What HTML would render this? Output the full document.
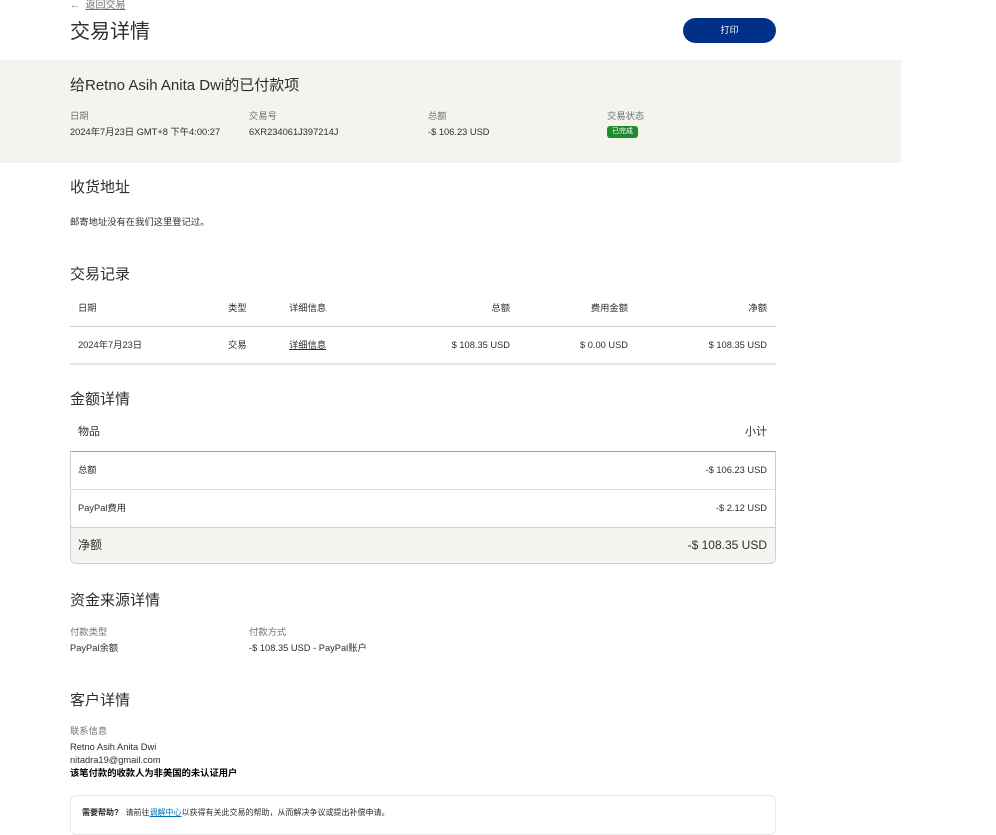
<!DOCTYPE html>
<html><head><meta charset="utf-8"><style>
*{margin:0;padding:0;box-sizing:border-box}
body{width:996px;height:824px;background:#fff;font-family:"Liberation Sans","Noto Sans CJK SC",sans-serif;color:#2c2e2f;position:relative;overflow:hidden}
.a{position:absolute;white-space:nowrap;line-height:1}
.s{font-size:9.3px}
.l{color:#6c7378}
.h{font-size:15px;color:#2c2e2f}
.r{text-align:right}
</style></head><body>
<div class="a s l" style="left:70px;top:1px;font-size:10px">←&nbsp; <span style="text-decoration:underline">返回交易</span></div>
<div class="a" style="left:70px;top:22px;font-size:20px">交易详情</div>
<div class="a" style="left:683px;top:18px;width:93px;height:25px;border-radius:13px;background:#003087;color:#fff;font-size:9px;line-height:25px;text-align:center">打印</div>

<div class="a" style="left:0;top:60px;width:901px;height:103px;background:#f4f3ee"></div>
<div class="a h" style="left:70px;top:78px">给Retno Asih Anita Dwi的已付款项</div>
<div class="a s l" style="left:70px;top:112px">日期</div>
<div class="a s" style="left:70px;top:128px">2024年7月23日 GMT+8 下午4:00:27</div>
<div class="a s l" style="left:249px;top:112px">交易号</div>
<div class="a s" style="left:249px;top:128px">6XR234061J397214J</div>
<div class="a s l" style="left:428px;top:112px">总额</div>
<div class="a s" style="left:428px;top:128px">-$ 106.23 USD</div>
<div class="a s l" style="left:607px;top:112px">交易状态</div>
<div class="a" style="left:607px;top:126px;width:31px;height:12px;border-radius:3px;background:#1e8c2c;color:#fff;font-size:7px;line-height:12px;text-align:center">已完成</div>

<div class="a h" style="left:70px;top:180px">收货地址</div>
<div class="a s" style="left:70px;top:218px">邮寄地址没有在我们这里登记过。</div>

<div class="a h" style="left:70px;top:267px">交易记录</div>
<div class="a s" style="left:78px;top:304px">日期</div>
<div class="a s" style="left:228px;top:304px">类型</div>
<div class="a s" style="left:289px;top:304px">详细信息</div>
<div class="a s r" style="left:410px;width:100px;top:304px">总额</div>
<div class="a s r" style="left:528px;width:100px;top:304px">费用金额</div>
<div class="a s r" style="left:667px;width:100px;top:304px">净额</div>
<div class="a" style="left:70px;top:326px;width:706px;height:1px;background:#cbd2d6"></div>
<div class="a s" style="left:78px;top:341px">2024年7月23日</div>
<div class="a s" style="left:228px;top:341px">交易</div>
<div class="a s" style="left:289px;top:341px;text-decoration:underline">详细信息</div>
<div class="a s r" style="left:410px;width:100px;top:341px">$ 108.35 USD</div>
<div class="a s r" style="left:528px;width:100px;top:341px">$ 0.00 USD</div>
<div class="a s r" style="left:667px;width:100px;top:341px">$ 108.35 USD</div>
<div class="a" style="left:70px;top:363px;width:706px;height:2px;background:#e3e6e8"></div>

<div class="a h" style="left:70px;top:392px">金额详情</div>
<div class="a" style="left:78px;top:427px;font-size:11px">物品</div>
<div class="a r" style="left:667px;width:100px;top:427px;font-size:11px">小计</div>
<div class="a" style="left:70px;top:451px;width:706px;height:113px;border:1px solid #cbd2d6;border-top:1px solid #9da3a6;border-radius:0 0 6px 6px;overflow:hidden">
 <div style="position:absolute;left:0;top:75px;width:100%;height:38px;background:#f5f4f0;border-top:1px solid #cbd2d6"></div>
 <div style="position:absolute;left:0;top:37px;width:100%;height:1px;background:#dcdfe1"></div>
</div>
<div class="a s" style="left:78px;top:466px">总额</div>
<div class="a s r" style="left:617px;width:150px;top:466px">-$ 106.23 USD</div>
<div class="a s" style="left:78px;top:504px">PayPal费用</div>
<div class="a s r" style="left:617px;width:150px;top:504px">-$ 2.12 USD</div>
<div class="a" style="left:78px;top:539px;font-size:12px">净额</div>
<div class="a r" style="left:617px;width:150px;top:539px;font-size:12px">-$ 108.35 USD</div>

<div class="a h" style="left:70px;top:593px">资金来源详情</div>
<div class="a s l" style="left:70px;top:628px">付款类型</div>
<div class="a s" style="left:70px;top:644px">PayPal余额</div>
<div class="a s l" style="left:249px;top:628px">付款方式</div>
<div class="a s" style="left:249px;top:644px">-$ 108.35 USD - PayPal账户</div>

<div class="a h" style="left:70px;top:693px">客户详情</div>
<div class="a s l" style="left:70px;top:727px">联系信息</div>
<div class="a s" style="left:70px;top:743px">Retno Asih Anita Dwi</div>
<div class="a s" style="left:70px;top:756px">nitadra19@gmail.com</div>
<div class="a s" style="left:70px;top:769px;font-weight:bold;color:#000">该笔付款的收款人为非美国的未认证用户</div>

<div class="a" style="left:70px;top:795px;width:706px;height:40px;border:1px solid #e6e8ea;border-radius:6px"></div>
<div class="a" style="left:82px;top:809px;font-size:8px"><b>需要帮助?</b>&nbsp;&nbsp; 请前往<span style="color:#0070ba;text-decoration:underline">调解中心</span>以获得有关此交易的帮助，从而解决争议或提出补偿申请。</div>
</body></html>
